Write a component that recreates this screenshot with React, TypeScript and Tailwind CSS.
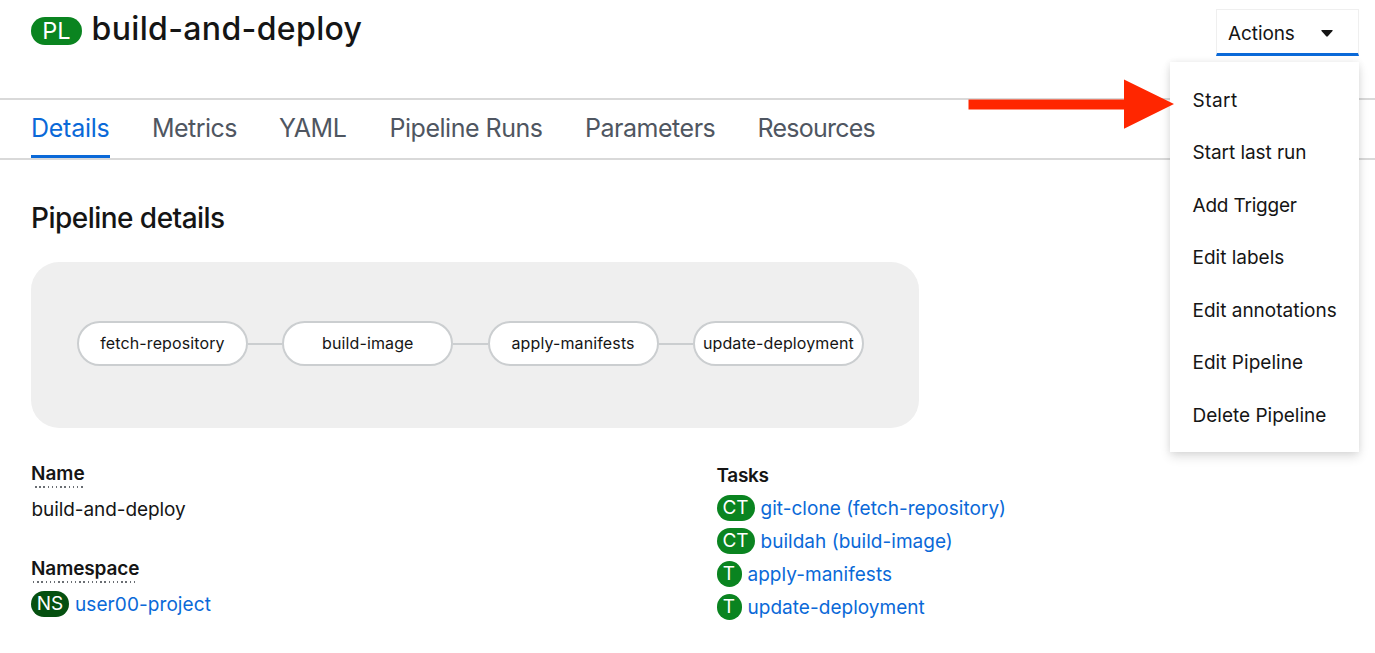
import type { ReactNode } from "react";

const tabs = [
  { label: "Details", cls: "w-[121px] tracking-[-0.25px]", active: true },
  { label: "Metrics", cls: "w-[127px] tracking-[-0.55px]" },
  { label: "YAML", cls: "w-[110.5px] tracking-[-0.4px]" },
  { label: "Pipeline Runs", cls: "w-[195.5px] tracking-[-0.48px]" },
  { label: "Parameters", cls: "w-[172.5px] tracking-[-0.47px]" },
  { label: "Resources", cls: "w-[140px] tracking-[-0.75px]" },
];

const nodes = ["fetch-repository", "build-image", "apply-manifests", "update-deployment"];

const tasks = [
  { kind: "CT", name: "git-clone (fetch-repository)" },
  { kind: "CT", name: "buildah (build-image)" },
  { kind: "T", name: "apply-manifests" },
  { kind: "T", name: "update-deployment" },
];

const actions = [
  { label: "Start", cls: "tracking-[0.45px]" },
  { label: "Start last run", cls: "tracking-[-0.05px]" },
  { label: "Add Trigger", cls: "tracking-[-0.2px]" },
  { label: "Edit labels", cls: "" },
  { label: "Edit annotations", cls: "" },
  { label: "Edit Pipeline", cls: "tracking-[0.03px]" },
  { label: "Delete Pipeline", cls: "" },
];

function Badge({ children, className }: { children: ReactNode; className: string }) {
  return (
    <span className={`flex h-[26px] shrink-0 items-center justify-center rounded-full leading-[26px] text-white ${className}`}>
      {children}
    </span>
  );
}

function Term({ children, dots }: { children: ReactNode; dots: string }) {
  return (
    <dt className="h-[24px] font-semibold leading-[26px]">
      <span className="block h-[25px]">{children}</span>
      <span className={`block h-[1.5px] bg-[repeating-linear-gradient(90deg,#6a6e73_0_1.5px,transparent_1.5px_4.2px)] ${dots}`} />
    </dt>
  );
}

function ActionsMenu() {
  return (
    <div className="relative mt-[9px] h-[47px] w-[143px]">
      <button className="flex h-[47px] w-full items-center border border-b-[3px] border-[#efefef] border-b-[#0a69d8] pl-[11px] pt-[3px] text-left tracking-[-0.1px]">
        <span className="w-[93px] pt-[2px]">Actions</span>
        <svg width="12" height="7" viewBox="0 0 12 7" fill="#151515">
          <path d="M1 0h10q1.3 0 .5 1L6.8 6.3q-.8.8-1.6 0L.5 1Q-.3 0 1 0z" />
        </svg>
      </button>
      <ul className="absolute right-0 top-[53px] z-10 h-[390px] w-[189px] bg-white pt-[12.5px] shadow-[0_5px_10px_rgba(3,3,3,0.12),0_0_7px_rgba(3,3,3,0.07)]">
        {actions.map((a) => (
          <li key={a.label} className={`flex h-[52.5px] items-center pl-[22.5px] ${a.cls}`}>
            {a.label}
          </li>
        ))}
      </ul>
      <svg className="absolute left-[-248px] top-[70px] z-20" width="206" height="50" viewBox="0 0 206 50" fill="#ff2600">
        <path d="M0.5 20.5H156V0.5L206 25L156 49.7V30.5H0.5z" />
      </svg>
    </div>
  );
}

export default function App() {
  return (
    <div className="h-[653px] w-[1375px] overflow-hidden bg-white font-['Inter',sans-serif] text-[19px] leading-[26px] text-[#151515]">
      <header className="flex h-[100px] justify-between border-b-2 border-[#d9d9d9] pl-[31px] pr-[16px]">
        <div className="flex">
          <span className="mt-[17px] flex h-[28px] w-[51px] items-center justify-center rounded-full bg-[#0a8420] text-[23.5px] leading-[28px] text-white">
            PL
          </span>
          <h1 className="ml-[9.5px] mt-[9px] text-[32px] font-medium leading-[40px] tracking-[0.35px]">build-and-deploy</h1>
        </div>
        <ActionsMenu />
      </header>

      <nav className="flex h-[60px] border-b-2 border-[#d9d9d9] pl-[31px] text-[25px] leading-[57px] text-[#4f5661]">
        {tabs.map((t) => (
          <a key={t.label} className={`block whitespace-nowrap ${t.cls}`}>
            <span className={t.active ? "block h-[58px] w-[79px] border-b-[3px] border-[#0a69d8] text-[#0a69d8]" : "block"}>{t.label}</span>
          </a>
        ))}
      </nav>

      <main className="pl-[31px]">
        <h2 className="h-[102px] pt-[40px] text-[28px] font-medium leading-[36px] tracking-[-0.53px]">Pipeline details</h2>

        <section className="flex h-[166px] w-[888px] items-center rounded-[28px] bg-[#efefef] pb-[4px] pl-[46px] text-[16px]">
          {nodes.map((n, i) => (
            <div key={n} className="flex items-center">
              {i > 0 && <div className="mt-px h-[2px] w-[34.3px] bg-[#cbced0]" />}
              <div className="flex h-[45px] w-[171px] items-center justify-center rounded-full border-2 border-[#cbced0] bg-white pb-px">
                <span className="whitespace-nowrap tracking-[0.12px]">{n}</span>
              </div>
            </div>
          ))}
        </section>

        <div className="flex pt-[33px]">
          <dl className="w-[685.5px]">
            <Term dots="ml-[4px] w-[49px]">Name</Term>
            <dd className="mt-[12px] h-[26px] pl-[0.5px] tracking-[-0.08px]">build-and-deploy</dd>
            <div className="h-[33px]" />
            <Term dots="ml-[2px] w-[104px]">
              <span className="tracking-[-0.1px]">Namespace</span>
            </Term>
            <dd className="mt-[11px] flex leading-[28px] tracking-[0.08px] text-[#0a69d8]">
              <Badge className="mr-[6px] w-[38px] bg-[#055010]">NS</Badge>
              user00-project
            </dd>
          </dl>
          <dl>
            <dt className="h-[34px] pt-[2px] font-semibold tracking-[-0.3px]">Tasks</dt>
            {tasks.map((t) => (
              <dd key={t.name} className="flex h-[33px] leading-[28px] tracking-[0.03px] text-[#0a69d8]">
                <Badge className={t.kind === "CT" ? "mr-[6px] w-[38px] bg-[#0a8420]" : "mr-[6px] w-[25px] bg-[#0a8420]"}>{t.kind}</Badge>
                {t.name}
              </dd>
            ))}
          </dl>
        </div>
      </main>
    </div>
  );
}
